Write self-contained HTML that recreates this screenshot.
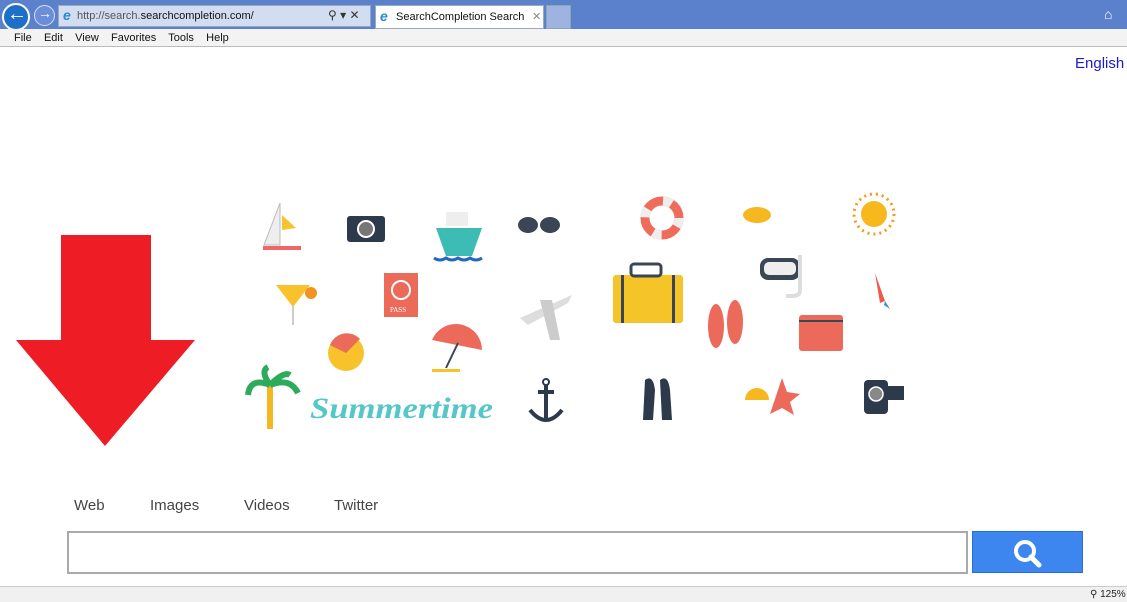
<!DOCTYPE html>
<html><head><meta charset="utf-8"><style>
*{margin:0;padding:0;box-sizing:border-box}
body{width:1127px;height:602px;overflow:hidden;background:#fff;font-family:"Liberation Sans",Arial,sans-serif;position:relative}
.a{position:absolute;white-space:nowrap}
</style></head><body>
<div class="a" style="left:0;top:0;width:1127px;height:29px;background:#5b80cc"></div>
<div class="a" style="left:2px;top:3px;width:28px;height:28px;border-radius:50%;background:#1e6fc8;border:2px solid #fff"></div>
<div class="a" style="left:7px;top:3px;color:#fff;font-size:20px;font-weight:bold">&#8592;</div>
<div class="a" style="left:34px;top:5px;width:21px;height:21px;border-radius:50%;background:#6a8fd8;border:1px solid #dde"></div>
<div class="a" style="left:38px;top:5px;color:#fff;font-size:14px">&#8594;</div>
<div class="a" style="left:58px;top:5px;width:313px;height:22px;background:#d3ddf2;border:1px solid #9ab"></div>
<div class="a" style="left:63px;top:7px;color:#2a8ad0;font-size:14px;font-style:italic;font-weight:bold">e</div>
<div class="a" style="left:77px;top:10px;font-size:11px;color:#555">http://search.<span style="color:#111">searchcompletion.com/</span></div>
<div class="a" style="left:328px;top:8px;font-size:12px;color:#333">&#9906; &#9662; &#10005;</div>
<div class="a" style="left:375px;top:5px;width:169px;height:24px;background:#fff;border:1px solid #9ab"></div>
<div class="a" style="left:380px;top:8px;color:#2a8ad0;font-size:14px;font-style:italic;font-weight:bold">e</div>
<div class="a" style="left:396px;top:11px;font-size:11px;color:#111">SearchCompletion Search</div>
<div class="a" style="left:532px;top:10px;font-size:11px;color:#888">&#10005;</div>
<div class="a" style="left:546px;top:5px;width:25px;height:24px;background:#9fb3e0;border:1px solid #8aa"></div>
<div class="a" style="left:1104px;top:6px;color:#fff;font-size:14px">&#8962;</div>
<div class="a" style="left:0;top:29px;width:1127px;height:18px;background:#f3f3f3;border-bottom:1px solid #bbb"></div>
<div class="a" style="left:14px;top:32px;font-size:11px;color:#111">File&nbsp;&nbsp;&nbsp; Edit&nbsp;&nbsp;&nbsp; View&nbsp;&nbsp;&nbsp; Favorites&nbsp;&nbsp;&nbsp; Tools&nbsp;&nbsp;&nbsp; Help</div>
<div class="a" style="left:1075px;top:55px;font-size:15px;color:#1a1ad0">English</div>
<svg class="a" style="left:0;top:0" width="1127" height="602">
<polygon points="61,235 151,235 151,340 195,340 105,446 16,340 61,340" fill="#ee1c25"/>
<polygon points="280,203 280,245 264,245" fill="#eee" stroke="#bbb"/><polygon points="282,215 296,228 282,230" fill="#f5c430"/><rect x="263" y="246" width="38" height="4" fill="#e66"/>
<rect x="347" y="216" width="38" height="26" rx="3" fill="#2d3a4b"/><circle cx="366" cy="229" r="8" fill="#777" stroke="#fff" stroke-width="2"/>
<polygon points="436,228 482,228 472,256 446,256" fill="#3cbcb5"/><rect x="446" y="212" width="22" height="14" fill="#eee"/><path d="M434 258 q6 4 12 0 q6 4 12 0 q6 4 12 0 q6 4 12 0" stroke="#2268c0" fill="none" stroke-width="3"/>
<ellipse cx="528" cy="225" rx="10" ry="8" fill="#3a4555"/><ellipse cx="550" cy="225" rx="10" ry="8" fill="#3a4555"/>
<circle cx="662" cy="218" r="17" fill="none" stroke="#ef6b5a" stroke-width="9"/><circle cx="662" cy="218" r="17" fill="none" stroke="#eee" stroke-width="9" stroke-dasharray="9 18"/>
<ellipse cx="757" cy="215" rx="14" ry="8" fill="#f5b820"/>
<circle cx="874" cy="214" r="13" fill="#f6b81d"/><circle cx="874" cy="214" r="20" fill="none" stroke="#f39a1d" stroke-width="3" stroke-dasharray="2 4"/>
<polygon points="276,285 310,285 293,307" fill="#f7c22c"/><rect x="292" y="305" width="2" height="20" fill="#ccc"/><circle cx="311" cy="293" r="6" fill="#f3921f"/>
<rect x="384" y="273" width="34" height="44" fill="#ec6a59"/><circle cx="401" cy="290" r="9" fill="none" stroke="#fff" stroke-width="2"/><text x="390" y="312" font-size="7" fill="#fff" font-family="Liberation Serif">PASS</text>
<polygon points="520,318 572,295 568,303 528,325" fill="#ddd"/><polygon points="540,300 552,300 560,340 550,340" fill="#ccc"/>
<rect x="613" y="275" width="70" height="48" rx="3" fill="#f5c428"/><rect x="631" y="264" width="30" height="12" rx="3" fill="none" stroke="#3a4555" stroke-width="3"/><rect x="621" y="275" width="3" height="48" fill="#3a4555"/><rect x="672" y="275" width="3" height="48" fill="#3a4555"/>
<rect x="760" y="258" width="40" height="22" rx="8" fill="#3a4555"/><rect x="764" y="262" width="32" height="13" rx="5" fill="#eee"/><path d="M800 255 v35 q0 6 -8 6 h-6" stroke="#ddd" stroke-width="4" fill="none"/>
<path d="M875 273 l10 28 l-5 2z" fill="#ec5a4a"/><path d="M885 301 l5 8 l-6 -4z" fill="#3a8de0"/>
<ellipse cx="716" cy="326" rx="8" ry="22" fill="#ec6a59"/><ellipse cx="735" cy="322" rx="8" ry="22" fill="#ec6a59"/>
<rect x="799" y="315" width="44" height="36" rx="3" fill="#ec6a59"/><rect x="799" y="320" width="44" height="2" fill="#3a4555"/>
<circle cx="346" cy="353" r="18" fill="#f7c22c"/><path d="M330 345 a18 18 0 0 1 30 -6 L346 353z" fill="#ec6a59"/>
<path d="M432 340 a26 26 0 0 1 50 10 z" fill="#ec6a59"/><line x1="458" y1="343" x2="446" y2="368" stroke="#3a4555" stroke-width="2"/><rect x="432" y="369" width="28" height="3" fill="#f5c428"/>
<rect x="267" y="385" width="6" height="44" fill="#f5b820"/><path d="M270 385 q-20 -8 -22 10 M270 385 q20 -8 28 8 M270 385 q-10 -14 -2 -18 M270 385 q14 -14 20 -10" stroke="#2dab5a" stroke-width="6" fill="none"/>
<text x="310" y="418" font-size="30" fill="#55c7c6" font-style="italic" font-weight="bold" font-family="Liberation Serif" textLength="183" lengthAdjust="spacingAndGlyphs">Summertime</text>
<path d="M546 385 v35 M530 410 q16 20 32 0 M538 392 h16" stroke="#2d3a4b" stroke-width="4" fill="none"/><circle cx="546" cy="382" r="3" fill="none" stroke="#2d3a4b" stroke-width="2"/>
<path d="M645 380 q8 -6 10 10 l-2 30 h-10z M660 380 q8 -6 10 10 l2 30 h-10z" fill="#2d3a4b"/>
<path d="M745 400 a12 12 0 0 1 24 0 z" fill="#f5b820"/><polygon points="782,378 787,392 800,394 790,402 794,415 782,408 770,414 774,402" fill="#ec6a59"/>
<rect x="864" y="380" width="24" height="34" rx="4" fill="#2d3a4b"/><rect x="886" y="386" width="18" height="14" fill="#2d3a4b"/><circle cx="876" cy="394" r="7" fill="#888" stroke="#fff" stroke-width="1.5"/>
</svg>
<div class="a" style="left:74px;top:497px;font-size:15px;color:#444">Web</div>
<div class="a" style="left:150px;top:497px;font-size:15px;color:#444">Images</div>
<div class="a" style="left:244px;top:497px;font-size:15px;color:#444">Videos</div>
<div class="a" style="left:334px;top:497px;font-size:15px;color:#444">Twitter</div>
<div class="a" style="left:67px;top:531px;width:901px;height:43px;border:2px solid #aaa;background:#fff"></div>
<div class="a" style="left:972px;top:531px;width:111px;height:42px;background:#3d86ef;border:1px solid #2b6fd6"></div>
<svg class="a" style="left:1010px;top:537px" width="36" height="32"><circle cx="15" cy="14" r="9" stroke="#fff" stroke-width="4" fill="none"/><line x1="21" y1="20" x2="29" y2="28" stroke="#fff" stroke-width="5" stroke-linecap="round"/></svg>
<div class="a" style="left:0;top:586px;width:1127px;height:16px;background:#f0f0f0;border-top:1px solid #ccc"></div>
<div class="a" style="left:1090px;top:589px;font-size:10px;color:#222">&#9906; 125%</div>
</body></html>
